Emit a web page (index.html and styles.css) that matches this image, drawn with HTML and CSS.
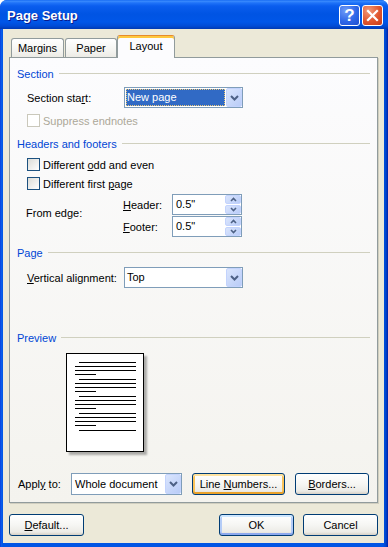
FILE: index.html
```html
<!DOCTYPE html>
<html lang="en">
<head>
    <meta charset="UTF-8">
    <meta name="viewport" content="width=device-width, initial-scale=1.0">
    <title>Page Setup</title>
    <link rel="stylesheet" href="styles.css">
</head>
<body>
    <div class="window">
        <div class="titlebar">
            <span class="title">Page Setup</span>
            <div class="caption-buttons">
                <span class="cap-btn help">?</span>
                <span class="cap-btn close">
                    <svg width="13" height="13" viewBox="0 0 13 13"><path d="M2 2 L11 11 M11 2 L2 11" stroke="#fff" stroke-width="2.2" stroke-linecap="square" fill="none"/></svg>
                </span>
            </div>
        </div>

        <div class="dialog">
            <div class="tabs">
                <div class="tab tab-margins">Margins</div>
                <div class="tab tab-paper">Paper</div>
                <div class="tab tab-layout active">Layout</div>
            </div>

            <div class="panel">
                <!-- Section -->
                <div class="group-head first"><span>Section</span></div>
                <div class="field-row row-start">
                    <span class="field-label">Section sta<u>r</u>t:</span>
                    <div class="combo">
                        <span class="combo-text focused"><span>New page</span></span>
                        <span class="drop-btn"><svg width="9" height="6" viewBox="0 0 9 6"><path d="M1 1 L4.5 4.5 L8 1" stroke="#4D6185" stroke-width="2" fill="none"/></svg></span>
                    </div>
                </div>
                <div class="check-row disabled row-suppress"><span class="checkbox"></span><span>Suppress endnotes</span></div>

                <!-- Headers and footers -->
                <div class="group-head row-hf"><span>Headers and footers</span></div>
                <div class="check-row row-odd"><span class="checkbox"></span><span>Different <u>o</u>dd and even</span></div>
                <div class="check-row row-first"><span class="checkbox"></span><span>Different first <u>p</u>age</span></div>
                <div class="edge">
                    <span class="edge-label">From edge:</span>
                    <span><u>H</u>eader:</span>
                    <div class="spin">
                        <span class="spin-text">0.5"</span>
                        <span class="spin-btns">
                            <span class="spin-btn"><svg width="7" height="5" viewBox="0 0 7 5"><path d="M1 4 L3.5 1.5 L6 4" stroke="#4D6185" stroke-width="1.6" fill="none"/></svg></span>
                            <span class="spin-btn"><svg width="7" height="5" viewBox="0 0 7 5"><path d="M1 1 L3.5 3.5 L6 1" stroke="#4D6185" stroke-width="1.6" fill="none"/></svg></span>
                        </span>
                    </div>
                    <span><u>F</u>ooter:</span>
                    <div class="spin">
                        <span class="spin-text">0.5"</span>
                        <span class="spin-btns">
                            <span class="spin-btn"><svg width="7" height="5" viewBox="0 0 7 5"><path d="M1 4 L3.5 1.5 L6 4" stroke="#4D6185" stroke-width="1.6" fill="none"/></svg></span>
                            <span class="spin-btn"><svg width="7" height="5" viewBox="0 0 7 5"><path d="M1 1 L3.5 3.5 L6 1" stroke="#4D6185" stroke-width="1.6" fill="none"/></svg></span>
                        </span>
                    </div>
                </div>

                <!-- Page -->
                <div class="group-head row-page"><span>Page</span></div>
                <div class="field-row row-valign">
                    <span class="field-label"><u>V</u>ertical alignment:</span>
                    <div class="combo">
                        <span class="combo-text">Top</span>
                        <span class="drop-btn"><svg width="9" height="6" viewBox="0 0 9 6"><path d="M1 1 L4.5 4.5 L8 1" stroke="#4D6185" stroke-width="2" fill="none"/></svg></span>
                    </div>
                </div>

                <!-- Preview -->
                <div class="group-head row-preview"><span>Preview</span></div>
                <div class="preview-page">
                    <div class="para"><i class="ln indent"></i><i class="ln"></i><i class="ln"></i><i class="ln short"></i></div>
                    <div class="para"><i class="ln indent"></i><i class="ln"></i><i class="ln"></i><i class="ln short"></i></div>
                    <div class="para"><i class="ln indent"></i><i class="ln"></i><i class="ln"></i><i class="ln short"></i></div>
                    <div class="para"><i class="ln indent"></i><i class="ln"></i><i class="ln"></i><i class="ln short"></i></div>
                    <div class="para"><i class="ln indent"></i></div>
                </div>

                <div class="apply-row">
                    <span class="apply-label">Appl<u>y</u> to:</span>
                    <div class="combo combo-apply">
                        <span class="combo-text">Whole document</span>
                        <span class="drop-btn"><svg width="9" height="6" viewBox="0 0 9 6"><path d="M1 1 L4.5 4.5 L8 1" stroke="#4D6185" stroke-width="2" fill="none"/></svg></span>
                    </div>
                    <span class="btn btn-lines hot"><span>Line <u>N</u>umbers...</span></span>
                    <span class="btn btn-borders"><span><u>B</u>orders...</span></span>
                </div>
            </div>

            <div class="footer">
                <span class="btn"><span><u>D</u>efault...</span></span>
                <div class="footer-right">
                    <span class="btn default">OK</span>
                    <span class="btn">Cancel</span>
                </div>
            </div>
        </div>
    </div>
</body>
</html>
```

FILE: styles.css
```css
* {
    box-sizing: border-box;
}

html, body {
    margin: 0;
    padding: 0;
}

body {
    width: 388px;
    height: 547px;
    background: #fff;
    font-family: "Liberation Sans", Arial, sans-serif;
    font-size: 11px;
    color: #000;
}

u {
    text-underline-offset: 1px;
}

/* window frame */
.window {
    width: 388px;
    height: 547px;
    display: flex;
    flex-direction: column;
    border-radius: 7px 7px 0 0;
    overflow: hidden;
    background: linear-gradient(90deg, #0831D9 0, #0A5EEA 1px, #0055E5 3px, #0055E5 383px, #0044CC 386px, #0020A8 388px);
}

.titlebar {
    height: 29px;
    flex-shrink: 0;
    display: flex;
    align-items: center;
    justify-content: space-between;
    padding: 0 5px 0 7px;
    background: linear-gradient(#0A5FF0 0, #3C8DFD 1px, #1E72F8 3px, #0A5DEE 6px, #0054E3 14px, #0056E8 22px, #004BD6 26px, #0039B2 29px);
}

.title {
    color: #fff;
    font-weight: bold;
    font-size: 13px;
    text-shadow: 1px 1px 0 #0A1A8C;
    margin-top: 1px;
}

.caption-buttons {
    display: flex;
    gap: 2px;
    margin-top: 2px;
}

.cap-btn {
    width: 21px;
    height: 21px;
    border: 1px solid #fff;
    border-radius: 3px;
    display: flex;
    align-items: center;
    justify-content: center;
    color: #fff;
}

.help {
    background: radial-gradient(circle at 30% 25%, #6F9CF7 0, #2F67E8 55%, #1F4FD0 100%);
    font-weight: bold;
    font-size: 17px;
}

.close {
    background: radial-gradient(circle at 30% 25%, #F29A7A 0, #E0562F 55%, #C63B19 100%);
}

/* dialog body */
.dialog {
    flex: 1;
    margin: 0 4px 4px 3px;
    background: #ECE9D8;
    padding: 6px 6px 0 6px;
}

.tabs {
    display: flex;
    align-items: flex-end;
    height: 22px;
    padding-left: 2px;
}

.tab {
    height: 19px;
    border: 1px solid #919B9C;
    border-bottom: none;
    border-radius: 3px 3px 0 0;
    background: linear-gradient(#FFFFFF, #F3F3EF 70%, #ECEBE5);
    text-align: center;
    line-height: 18px;
}

.tab-margins {
    width: 53px;
    margin-right: 1px;
}

.tab-paper {
    width: 52px;
}

.tab-layout {
    width: 58px;
}

.tab.active {
    height: 23px;
    margin-bottom: -1px;
    position: relative;
    z-index: 1;
    background: #FCFCFE;
    border-top: 1px solid #E68B2C;
    box-shadow: inset 0 2px 0 #FFC83C;
    line-height: 21px;
}

.panel {
    height: 446px;
    border: 1px solid #919B9C;
    background: linear-gradient(#FCFCFE, #F4F3EE);
    box-shadow: 1px 1px 0 #D0CEBF;
    padding: 0 7px;
}

.group-head {
    display: flex;
    align-items: center;
    gap: 5px;
    height: 13px;
    color: #0046D5;
}

.group-head::after {
    content: "";
    flex: 1;
    height: 1px;
    background: #D0D0BF;
}

.group-head.first {
    margin-top: 9px;
}

.row-hf {
    margin-top: 10px;
}

.row-page {
    margin-top: 9px;
}

.row-preview {
    margin-top: 43px;
}

.field-row {
    display: flex;
    align-items: center;
    padding-left: 10px;
}

.row-start {
    margin-top: 7px;
}

.row-valign {
    margin-top: 8px;
}

.field-label {
    width: 97px;
}

/* combo box */
.combo {
    display: flex;
    width: 119px;
    height: 21px;
    border: 1px solid #7F9DB9;
    background: #fff;
}

.combo-text {
    flex: 1;
    padding-left: 2px;
    line-height: 19px;
    white-space: nowrap;
}

.combo-text.focused {
    padding: 1px;
}

.combo-text.focused span {
    display: block;
    height: 17px;
    line-height: 16px;
    padding-left: 1px;
    background: #316AC5;
    color: #fff;
    outline: 1px dotted #E8C77A;
    outline-offset: -1px;
}

.drop-btn {
    width: 16px;
    height: 19px;
    border: 1px solid #C3D3FD;
    border-radius: 2px;
    background: linear-gradient(135deg, #DAE5FD, #B9CCF7);
    display: flex;
    align-items: center;
    justify-content: center;
}

/* checkboxes */
.check-row {
    display: flex;
    align-items: center;
    gap: 3px;
    height: 13px;
    padding-left: 10px;
}

.row-suppress {
    margin-top: 6px;
}

.row-odd {
    margin-top: 8px;
}

.row-first {
    margin-top: 6px;
}

.checkbox {
    width: 13px;
    height: 13px;
    border: 1px solid #1C5180;
    background: linear-gradient(135deg, #DCDCD7, #FFFFFF);
}

.check-row.disabled {
    color: #ACA899;
}

.check-row.disabled .checkbox {
    border-color: #CAC8BB;
    background: #fff;
}

/* from edge spinners */
.edge {
    display: grid;
    grid-template-columns: 97px 49px 70px;
    grid-template-rows: 21px 21px;
    row-gap: 1px;
    align-items: center;
    padding-left: 9px;
    margin-top: 4px;
}

.edge-label {
    grid-row: 1 / span 2;
    padding-bottom: 5px;
}

.spin {
    display: flex;
    height: 21px;
    border: 1px solid #7F9DB9;
    background: #fff;
}

.spin-text {
    flex: 1;
    padding-left: 3px;
    line-height: 19px;
}

.spin-btns {
    display: flex;
    flex-direction: column;
    gap: 1px;
    width: 16px;
}

.spin-btn {
    height: 9px;
    border: 1px solid #C3D3FD;
    border-radius: 2px;
    background: linear-gradient(135deg, #DAE5FD, #B9CCF7);
    display: flex;
    align-items: center;
    justify-content: center;
}

/* preview */
.preview-page {
    width: 78px;
    height: 99px;
    margin: 9px 0 0 49px;
    border: 1px solid #000;
    background: #fff;
    padding-top: 8px;
    box-shadow: 3px 3px 2px rgba(0, 0, 0, 0.3);
    overflow: hidden;
}

.para {
    margin-bottom: 4px;
}

.ln {
    display: block;
    height: 1px;
    width: 61px;
    margin: 0 0 3px 8px;
    background: #000;
}

.ln.indent {
    width: 57px;
    margin-left: 12px;
}

.ln.short {
    width: 21px;
}

/* apply row */
.apply-row {
    display: flex;
    align-items: center;
    margin-top: 21px;
    padding-left: 1px;
}

.apply-label {
    width: 53px;
}

.combo-apply {
    width: 111px;
    height: 22px;
}

.combo-apply .combo-text {
    padding-left: 3px;
    line-height: 20px;
}

.combo-apply .drop-btn {
    height: 20px;
}

/* buttons */
.btn {
    height: 22px;
    width: 75px;
    border: 1px solid #003C74;
    border-radius: 3px;
    background: linear-gradient(#FFFFFF 0%, #F6F6F3 50%, #ECEBE6 85%, #D6D0C5 100%);
    display: flex;
    align-items: center;
    justify-content: center;
}

.btn-lines {
    width: 93px;
    margin-left: 10px;
}

.btn-borders {
    width: 74px;
    margin-left: 10px;
}

.btn.hot {
    box-shadow: inset 0 2px 0 #FFE3A0, inset 0 -2px 0 #E9A12A, inset 2px 0 0 #FAC35A, inset -2px 0 0 #FAC35A;
}

.btn.default {
    box-shadow: inset 0 2px 0 #CEE7FF, inset 0 -2px 0 #8DA9EE, inset 2px 0 0 #B4CCF7, inset -2px 0 0 #B4CCF7;
}

.footer {
    display: flex;
    justify-content: space-between;
    margin-top: 11px;
}

.footer-right {
    display: flex;
    gap: 9px;
}
```
